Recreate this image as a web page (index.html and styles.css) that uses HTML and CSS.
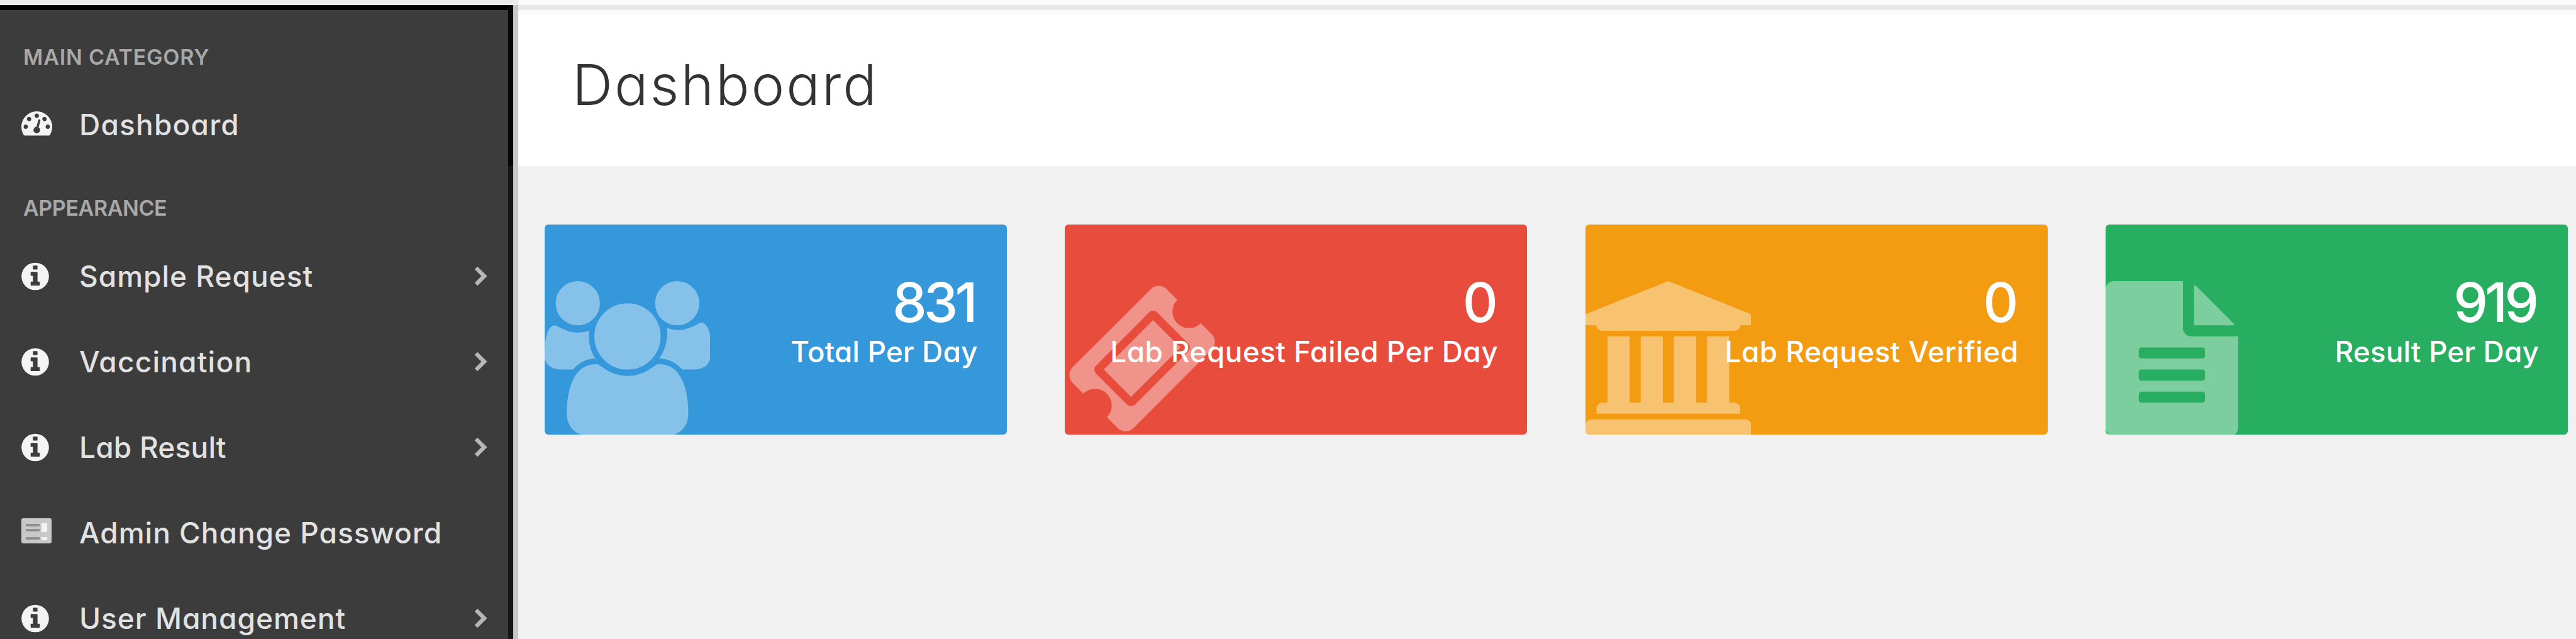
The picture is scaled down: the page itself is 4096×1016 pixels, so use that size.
FILE: index.html
```html
<!DOCTYPE html>
<html lang="en">
<head>
<meta charset="utf-8">
<title>Dashboard</title>
<link rel="stylesheet" href="styles.css">
</head>
<body>
<svg class="sprite" aria-hidden="true">
  <symbol id="info" viewBox="128 0 1536 1792"><path d="M1152 1376v-160q0-14-9-23t-23-9h-96v-512q0-14-9-23t-23-9h-320q-14 0-23 9t-9 23v160q0 14 9 23t23 9h96v320h-96q-14 0-23 9t-9 23v160q0 14 9 23t23 9h448q14 0 23-9t9-23zm-128-896v-160q0-14-9-23t-23-9h-192q-14 0-23 9t-9 23v160q0 14 9 23t23 9h192q14 0 23-9t9-23zm640 416q0 209-103 385.5t-279.5 279.5-385.5 103-385.5-103-279.5-279.5-103-385.5 103-385.5 279.5-279.5 385.5-103 385.5 103 279.5 279.5 103 385.5z"/></symbol>
  <symbol id="angle" viewBox="0 0 24 32"><path d="M4 3l13 13L4 29" fill="none" stroke="currentColor" stroke-width="6.5"/></symbol>
</svg>
<div class="shell">
  <nav class="sidebar">
    <h2 class="group">MAIN CATEGORY</h2>
    <a class="item"><svg class="ico gauge" viewBox="0 0 1792 1792"><path d="M384 1152q0-53-37.5-90.5t-90.5-37.5-90.5 37.5-37.5 90.5 37.5 90.5 90.5 37.5 90.5-37.5 37.5-90.5zm192-448q0-53-37.5-90.5t-90.5-37.5-90.5 37.5-37.5 90.5 37.5 90.5 90.5 37.5 90.5-37.5 37.5-90.5zm428 481l101-382q6-26-7.5-48.5t-38.5-29.5-48 6.5-30 39.5l-101 382q-60 5-107 43.5t-63 98.5q-20 77 20 146t117 89 146-20 89-117q16-60-6-117t-72-91zm660-33q0-53-37.5-90.5t-90.5-37.5-90.5 37.5-37.5 90.5 37.5 90.5 90.5 37.5 90.5-37.5 37.5-90.5zm-640-640q0-53-37.5-90.5t-90.5-37.5-90.5 37.5-37.5 90.5 37.5 90.5 90.5 37.5 90.5-37.5 37.5-90.5zm448 192q0-53-37.5-90.5t-90.5-37.5-90.5 37.5-37.5 90.5 37.5 90.5 90.5 37.5 90.5-37.5 37.5-90.5zm320 448q0 261-141 483-19 29-54 29h-1402q-35 0-54-29-141-221-141-483 0-182 71-348t191-286 286-191 348-71 348 71 286 191 191 286 71 348z"/></svg><span class="text wide">Dashboard</span></a>
    <h2 class="group second">APPEARANCE</h2>
    <a class="item"><svg class="ico round"><use href="#info"/></svg><span class="text">Sample Request</span><svg class="angle"><use href="#angle"/></svg></a>
    <a class="item"><svg class="ico round"><use href="#info"/></svg><span class="text wide">Vaccination</span><svg class="angle"><use href="#angle"/></svg></a>
    <a class="item"><svg class="ico round"><use href="#info"/></svg><span class="text tight">Lab Result</span><svg class="angle"><use href="#angle"/></svg></a>
    <a class="item"><svg class="ico list" viewBox="0 0 48 40"><rect width="48" height="40" rx="3" fill="#c9c9c9"/><path d="M7 11h22M7 19h22M7 32h22" stroke="#8f8f8f" stroke-width="4"/><path d="M32 8h9v14h-9zM32 30h9v5h-9z" fill="#f2f2f2"/></svg><span class="text">Admin Change Password</span></a>
    <a class="item"><svg class="ico round"><use href="#info"/></svg><span class="text">User Management</span><svg class="angle"><use href="#angle"/></svg></a>
  </nav>
  <div class="edge"></div>
  <main class="main">
    <header class="head"><h1 class="title">Dashboard</h1></header>
    <section class="cards">
      <article class="card blue">
        <svg class="art" viewBox="0 0 1920 1792"><path d="M593 896q-162 5-265 128h-134q-82 0-138-40.5t-56-118.5q0-353 124-353 6 0 43.5 21t97.5 42.5 119 21.5q67 0 133-23-5 37-5 66 0 159 93 287zm1071 637q0 120-73 189.5t-194 69.5h-874q-121 0-194-69.5t-73-189.5q0-53 3.5-103.5t14-109 26.5-108.5 43-97.5 62-81 85.5-53.5 111.5-20q10 0 43 21.5t73 48 107 48 135 21.5 135-21.5 107-48 73-48 43-21.5q61 0 111.5 20t85.5 53.5 62 81 43 97.5 26.5 108.5 14 109 3.5 103.5zm-1024-1277q0 106-75 181t-181 75-181-75-75-181 75-181 181-75 181 75 75 181zm704 384q0 159-112.5 271.5t-271.5 112.5-271.5-112.5-112.5-271.5 112.5-271.5 271.5-112.5 271.5 112.5 112.5 271.5zm576 225q0 78-56 118.5t-138 40.5h-134q-103-123-265-128 93-128 93-287 0-29-5-66 66 23 133 23 59 0 119-21.5t97.5-42.5 43.5-21q124 0 124 353zm-128-609q0 106-75 181t-181 75-181-75-75-181 75-181 181-75 181 75 75 181z"/></svg>
        <div class="num digits">831</div><div class="label">Total Per Day</div></article>
      <article class="card red">
        <svg class="art" viewBox="0 0 1792 1792"><path d="M1024 452l316 316-572 572-316-316zm-211 979l618-618q19-19 19-45t-19-45l-362-362q-18-18-45-18t-45 18l-618 618q-19 19-19 45t19 45l362 362q18 18 45 18t45-18zm889-637l-907 908q-37 37-90.5 37t-90.5-37l-126-126q56-56 56-136t-56-136-136-56-136 56l-125-126q-37-37-37-90.5t37-90.5l907-906q37-37 90.5-37t90.5 37l125 125q-56 56-56 136t56 136 136 56 136-56l126 125q37 37 37 90.5t-37 90.5z"/></svg>
        <div class="num">0</div><div class="label loose">Lab Request Failed Per Day</div></article>
      <article class="card orange">
        <svg class="art" viewBox="0 0 1920 1792"><path d="M960 0l960 384v128h-128q0 26-20.5 45t-48.5 19h-1526q-28 0-48.5-19t-20.5-45h-128v-128zm-704 640h256v768h128v-768h256v768h128v-768h256v768h128v-768h256v768h59q28 0 48.5 19t20.5 45v64h-1664v-64q0-26 20.5-45t48.5-19h59v-768zm1595 960q28 0 48.5 19t20.5 45v128h-1920v-128q0-26 20.5-45t48.5-19h1782z"/></svg>
        <div class="num">0</div><div class="label loose">Lab Request Verified</div></article>
      <article class="card green">
        <svg class="art" viewBox="128 0 1536 1792"><path d="M1596 476q14 14 28 36h-472v-472q22 14 36 28zm-476 164h544v1056q0 40-28 68t-68 28h-1344q-40 0-68-28t-28-68v-1600q0-40 28-68t68-28h800v544q0 40 28 68t68 28zm160 736v-64q0-14-9-23t-23-9h-704q-14 0-23 9t-9 23v64q0 14 9 23t23 9h704q14 0 23-9t9-23zm0-256v-64q0-14-9-23t-23-9h-704q-14 0-23 9t-9 23v64q0 14 9 23t23 9h704q14 0 23-9t9-23zm0-256v-64q0-14-9-23t-23-9h-704q-14 0-23 9t-9 23v64q0 14 9 23t23 9h704q14 0 23-9t9-23z"/></svg>
        <div class="num digits">919</div><div class="label">Result Per Day</div></article>
    </section>
  </main>
</div>
</body>
</html>
```
FILE: styles.css
```css
*{box-sizing:border-box;margin:0;padding:0}
body{font-family:Inter,"Liberation Sans",sans-serif;font-feature-settings:"cv11" 1;background:#f1f1f1;height:1016px;overflow:hidden}
.sprite{position:absolute;width:0;height:0}
.shell{display:flex;height:1016px}

/* sidebar */
.sidebar{width:808px;flex:none;background:linear-gradient(#ebebeb 0 8px,#000 8px 16px,#3c3c3c 16px);color:#e2e2e2;padding-top:54px;overflow:hidden}
.group{font-size:34px;font-weight:600;line-height:74px;margin-bottom:2px;letter-spacing:.8px;padding-left:37px;color:#a8a8a8}
.group.second{line-height:80px;margin-bottom:0;letter-spacing:-.4px;padding-top:25px}
.item{display:flex;align-items:center;height:136px;padding:0 31px 0 34px;font-size:46px;font-weight:500}
.text{line-height:136px;letter-spacing:1px}
.text.wide{letter-spacing:1.2px}
.text.tight{letter-spacing:.2px}
.ico{flex:none;height:51px;margin-right:48px;fill:#f4f4f4}
.round{width:44px}
.gauge{width:49px;height:49px;margin:0 43px 8px 0}
.list{width:48px;height:40px;margin:0 44px 7px 0}
.angle{width:24px;height:32px;margin-left:auto;color:#b9b5b2}
.edge{flex:none;width:16px;background:linear-gradient(90deg,transparent 8px,#c8c8c8 8px) 0 8px no-repeat,linear-gradient(#ebebeb 0 8px,#060606 8px 264px,#161616 264px)}

/* page heading */
.main{flex:1}
.head{height:264px;padding:39px 0 0 86px;background:linear-gradient(#fafafa 0 8px,#e8e8e8 8px 16px,#fafafa 16px 24px,#fff 24px)}
.title{font-size:89px;font-weight:300;line-height:192px;letter-spacing:3px;color:#333}

/* summary cards */
.cards{display:grid;grid-template-columns:repeat(4,735px);column-gap:92.5px;padding:93px 0 0 41.5px}
.card{position:relative;height:334px;padding:79px 46px 0 0;border-radius:6px;overflow:hidden;color:#fff;text-align:right;white-space:nowrap}
.blue{background:#3498db}
.red{background:#e74c3c}
.orange{background:#f39c12}
.green{background:#27ae60}
.art{position:absolute;left:0;bottom:-2px;height:246px;fill:rgba(255,255,255,.4)}
.num,.label{position:relative}
.num{font-size:87px;font-weight:500;line-height:90px}
.digits{letter-spacing:-5px;padding-right:5px}
.label{font-size:46px;font-weight:500;line-height:66px;letter-spacing:.1px}
.label.loose{letter-spacing:.4px}
```
